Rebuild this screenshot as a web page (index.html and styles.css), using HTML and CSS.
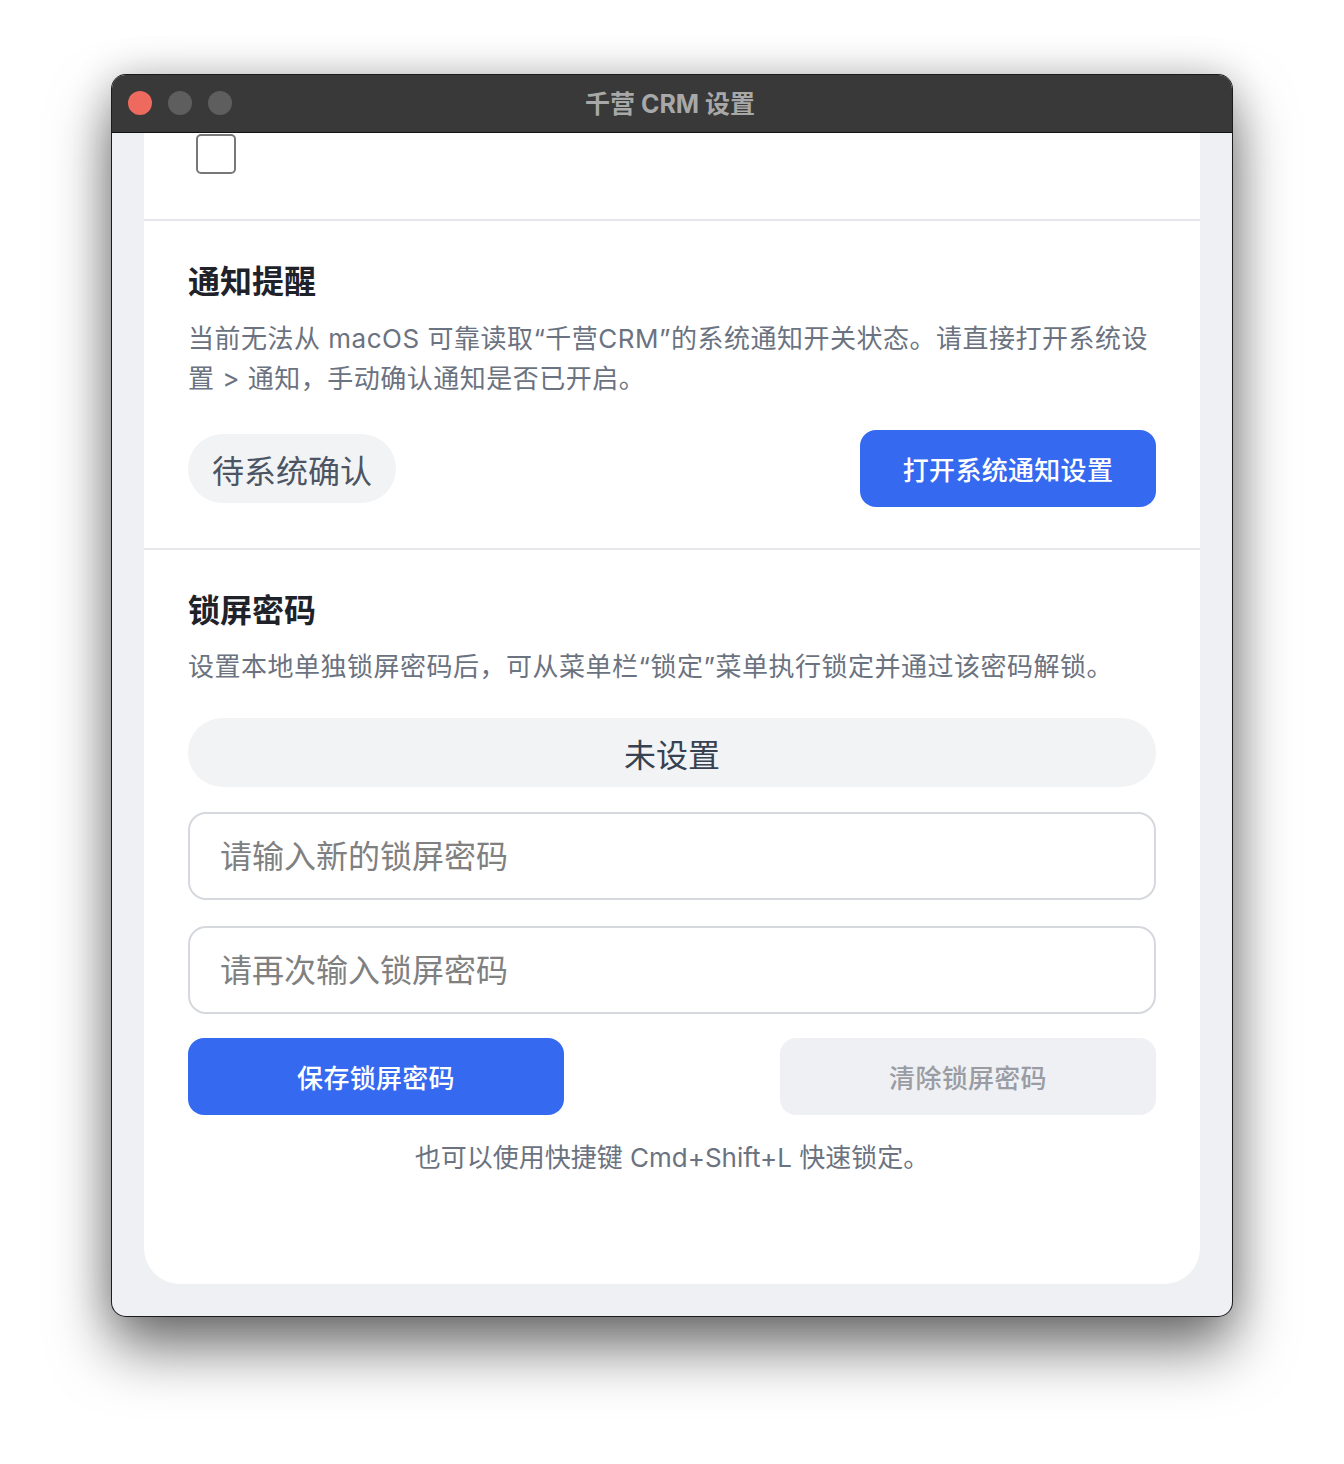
FILE: index.html
```html
<!DOCTYPE html>
<html lang="zh-CN">
<head>
    <meta charset="UTF-8">
    <meta name="viewport" content="width=device-width, initial-scale=1.0">
    <title>千营 CRM 设置</title>
    <link rel="stylesheet" href="styles.css">
</head>
<body>
    <div class="window">
        <div class="titlebar">
            <div class="lights">
                <span class="light close"></span>
                <span class="light"></span>
                <span class="light"></span>
            </div>
            <div class="title">千营 CRM 设置</div>
        </div>
        <div class="content">
            <div class="card">
                <section class="section section-top">
                    <input type="checkbox" class="check" aria-label="启用">
                </section>

                <!-- 通知 -->
                <section class="section">
                    <h2>通知提醒</h2>
                    <p class="desc">当前无法从 macOS 可靠读取“千营CRM”的系统通知开关状态。请直接打开系统设置 &gt; 通知，手动确认通知是否已开启。</p>
                    <div class="row">
                        <span class="pill">待系统确认</span>
                        <button class="btn btn-primary btn-wide">打开系统通知设置</button>
                    </div>
                </section>

                <!-- 锁屏密码 -->
                <section class="section section-last">
                    <h2>锁屏密码</h2>
                    <p class="desc">设置本地单独锁屏密码后，可从菜单栏“锁定”菜单执行锁定并通过该密码解锁。</p>
                    <div class="status">未设置</div>
                    <input type="password" class="field" placeholder="请输入新的锁屏密码">
                    <input type="password" class="field field-second" placeholder="请再次输入锁屏密码">
                    <div class="row actions">
                        <button class="btn btn-primary btn-half">保存锁屏密码</button>
                        <button class="btn btn-muted btn-half" disabled>清除锁屏密码</button>
                    </div>
                    <p class="hint">也可以使用快捷键 Cmd+Shift+L 快速锁定。</p>
                </section>
            </div>
        </div>
    </div>
</body>
</html>
```

FILE: styles.css
```css
body {
    margin: 0;
    padding: 75px 0 0;
    background-color: #ffffff;
    font-family: Inter, "Noto Sans CJK SC", sans-serif;
    height: 1389px;
    overflow: hidden;
}
.window {
    width: 1120px;
    height: 1241px;
    margin: 0 auto;
    border-radius: 14px;
    overflow: hidden;
    background-color: #eef0f4;
    box-shadow: 0 0 0 1px #1b1b1b, 0 32px 60px rgba(0,0,0,0.55), 0 0 40px rgba(0,0,0,0.2);
    display: flex;
    flex-direction: column;
}
.titlebar {
    height: 57px;
    flex: none;
    background-color: #383938;
    border-bottom: 1px solid #111;
    position: relative;
    display: flex;
    align-items: center;
    justify-content: center;
}
.lights {
    position: absolute;
    left: 16px;
    top: 16px;
    display: flex;
    gap: 16px;
}
.light {
    width: 24px;
    height: 24px;
    border-radius: 50%;
    background-color: #5d5e5d;
}
.light.close {
    background-color: #ee6a5e;
}
.title {
    color: #a8a8a8;
    font-size: 25px;
    font-weight: 700;
    margin-left: -4px;
    margin-top: -3px;
}
.content {
    flex: 1;
    min-height: 0;
    padding: 0 32px 32px;
    display: flex;
    flex-direction: column;
    justify-content: flex-end;
    overflow: hidden;
}
.card {
    flex: none;
    background-color: #fff;
    border-radius: 36px;
}
.section {
    padding: 41px 44px 41px;
    border-top: 2px solid #e6e7eb;
}
.section-top {
    border-top: none;
    padding: 60px 52px 45px;
}
.section-top + .section {
    padding-top: 41px;
}
.check {
    appearance: none;
    -webkit-appearance: none;
    display: block;
    margin: 0;
    width: 40px;
    height: 40px;
    border: 2px solid #787878;
    border-radius: 5px;
    background: #fff;
}
.section h2 {
    margin: 0;
    font-size: 32px;
    line-height: 40px;
    font-weight: 700;
    color: #1f2329;
}
.desc {
    margin: 16px 0 0;
    font-size: 26px;
    line-height: 40px;
    letter-spacing: 0.5px;
    color: #6b7280;
}
.section-top + .section .desc {
    margin-top: 17px;
}
.row {
    display: flex;
    justify-content: space-between;
    align-items: center;
    margin-top: 31px;
}
.pill {
    height: 69px;
    padding: 0 24px;
    border-radius: 35px;
    background-color: #f2f3f5;
    color: #4b5563;
    font-size: 32px;
    display: flex;
    align-items: center;
}
.btn {
    height: 77px;
    border: none;
    border-radius: 16px;
    font-family: inherit;
    font-size: 26px;
    font-weight: 500;
    letter-spacing: 0.3px;
    cursor: pointer;
}
.btn-primary {
    background-color: #3469f0;
    color: #fff;
}
.btn-wide {
    width: 296px;
}
.btn-half {
    width: 376px;
}
.btn-muted {
    background-color: #eff0f3;
    color: #9a9ca3;
    cursor: default;
}
.status {
    margin-top: 31px;
    height: 69px;
    border-radius: 35px;
    background-color: #f2f3f5;
    color: #374151;
    font-size: 32px;
    display: flex;
    align-items: center;
    justify-content: center;
}
.field {
    display: block;
    box-sizing: border-box;
    width: 100%;
    height: 88px;
    margin-top: 25px;
    padding: 0 30px;
    border: 2px solid #d5d8dd;
    border-radius: 18px;
    font-family: inherit;
    font-size: 32px;
    color: #1f2329;
    background: #fff;
    outline: none;
}
.field::placeholder {
    color: #808080;
}
.field-second {
    margin-top: 26px;
}
.actions {
    margin-top: 24px;
}
.hint {
    margin: 23px 0 0;
    text-align: center;
    font-size: 26px;
    line-height: 40px;
    color: #6b7280;
}
.section-last {
    padding-bottom: 106px;
}
```
